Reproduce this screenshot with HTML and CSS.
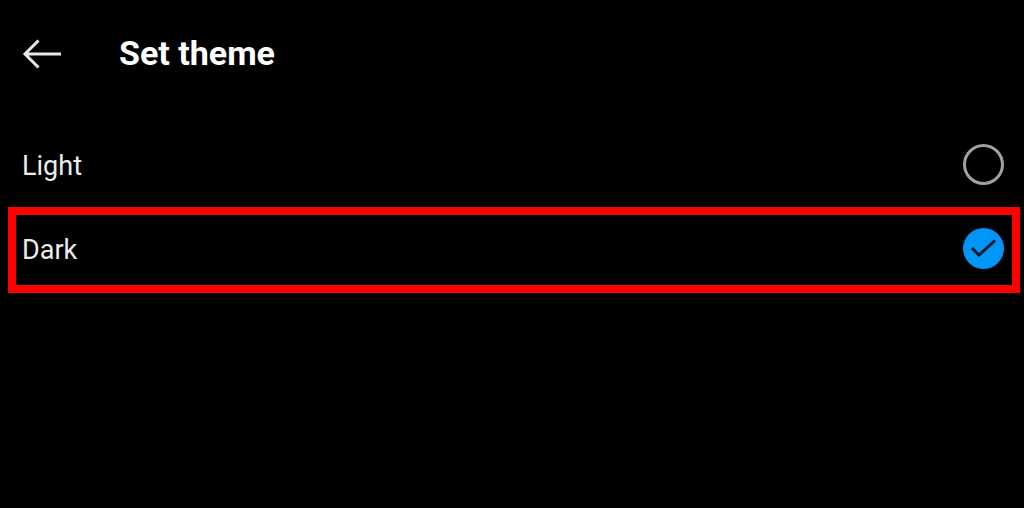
FILE: index.html
```html
<!DOCTYPE html>
<html lang="en">
<head>
  <meta charset="UTF-8">
  <title>Set theme</title>
  <link rel="stylesheet" href="styles.css">
</head>
<body>
  <div class="header">
    <svg class="back-icon" width="40" height="36" viewBox="0 0 40 36">
      <path d="M39 18H3M16.500 4.500L3 18L16.500 31.500" fill="none" stroke="#e8e8e8" stroke-width="3"/>
    </svg>
    <h1>Set theme</h1>
  </div>
  <div class="theme-list">
    <div class="theme-row">
      <span class="label">Light</span>
      <span class="radio"></span>
    </div>
    <div class="theme-row selected">
      <span class="label">Dark</span>
      <svg class="check" width="41" height="41" viewBox="0 0 41 41">
        <circle cx="20.500" cy="20.500" r="20.500" fill="#0095f6"/>
        <path d="M9 20L16 27L32 12.500" fill="none" stroke="#0b1a26" stroke-width="3"/>
      </svg>
    </div>
  </div>
</body>
</html>
```

FILE: styles.css
```css
* { margin: 0; padding: 0; box-sizing: border-box; }
body {
  background: #000;
  color: #ececec;
  font-family: 'Roboto', sans-serif;
  height: 508px;
  overflow: hidden;
}
.header {
  display: flex;
  align-items: center;
  height: 108px;
  padding-left: 22px;
}
.back-icon { margin-right: 57px; }
h1 {
  font-size: 34px;
  font-weight: 700;
  color: #fff;
  margin-top: -2px;
}
.theme-list {
  margin-top: 15px;
}
.theme-row {
  display: flex;
  justify-content: space-between;
  align-items: center;
  height: 84px;
  padding: 0 20px 2px 22px;
  font-size: 27px;
}
.label { margin-top: 3px; }
.radio {
  width: 41px;
  height: 41px;
  border: 3px solid #a0a0a0;
  border-radius: 50%;
}
.selected {
  height: 86px;
  margin: 0 4px 0 8px;
  padding: 0 8px 4px 6px;
  border: 8px solid #ff0000;
}
```
